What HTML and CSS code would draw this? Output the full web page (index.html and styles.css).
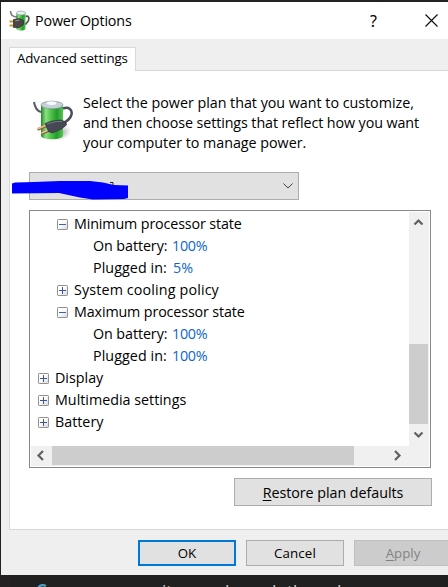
FILE: index.html
```
<!DOCTYPE html>
<html lang="en">
<head>
<meta charset="utf-8">
<title>Power Options</title>
<link rel="stylesheet" href="styles.css">
</head>
<body>
<svg width="0" height="0" class="defs" aria-hidden="true">
  <defs>
    <linearGradient id="cell" x1="0" x2="1" y1="0" y2="0">
      <stop offset="0" stop-color="#23852a"/><stop offset=".22" stop-color="#8ce084"/><stop offset=".42" stop-color="#55c84f"/><stop offset=".72" stop-color="#239b2c"/><stop offset="1" stop-color="#54c651"/>
    </linearGradient>
    <linearGradient id="box" x1="0" x2="1" y1="0" y2="1">
      <stop offset=".4" stop-color="#fff"/><stop offset="1" stop-color="#d6d6d6"/>
    </linearGradient>
    <radialGradient id="shade"><stop offset="0" stop-color="#888" stop-opacity=".7"/><stop offset="1" stop-color="#999" stop-opacity="0"/></radialGradient>
    <symbol id="battery" viewBox="0 0 40 42">
      <ellipse cx="28" cy="33" rx="11" ry="7" fill="url(#shade)" transform="rotate(-25 28 33)"/>
      <path d="M1 2C2 8 4 11 8 12" fill="none" stroke="#555967" stroke-width="2"/>
      <path d="M8 5v30.500c0 5 22 5 22 0V5z" fill="url(#cell)"/>
      <ellipse cx="19" cy="5" rx="11" ry="3.800" fill="#c6d1d8" stroke="#858d95" stroke-width=".7"/>
      <ellipse cx="18.500" cy="3.300" rx="5.500" ry="2.200" fill="#f5fafc" stroke="#b4c4d2" stroke-width=".6"/>
      <path d="M30 8.500c6-2 9.500 1 8.500 6s-5 7-9 9" fill="none" stroke="#4a4d5b" stroke-width="2.500"/>
      <path d="M4.500 29.500l10-4M9 33.500l9-4" stroke="#885f3d" stroke-width="2.600"/>
      <path d="M4 29l10-4M8.500 33l9-4" stroke="#edc18d" stroke-width="1.500"/>
      <path d="M12 23.500l7-2.500 9-1 5 2 .5 3-5 4-9 4-4-1.500z" fill="#464854" stroke="#292a34" stroke-width=".6"/>
      <path d="M14 24l9-2.500 6 0" fill="none" stroke="#82838c" stroke-width=".8"/>
    </symbol>
    <symbol id="battery-small" viewBox="0 0 20 21">
      <path d="M1 1c0 4 3 6 7 6" fill="none" stroke="#777" stroke-width="1.500"/>
      <path d="M7 3h9v16c-2 2-7 2-9 0z" fill="url(#cell)"/>
      <ellipse cx="11.500" cy="3" rx="4.500" ry="2" fill="#e5efef" stroke="#949e9e" stroke-width=".7"/>
      <path d="M16 6.500c3-1 4 1 3 4l-3 4" fill="none" stroke="#555" stroke-width="1.700"/>
      <path d="M0 11.500h6M0 15.500h6" stroke="#c99a2c" stroke-width="2"/>
      <path d="M4 9.500l6-1 4 2v4l-4 3H4z" fill="#4a4646" stroke="#302d2d" stroke-width=".7"/>
      <path d="M6 11l4-1" stroke="#999"/>
    </symbol>
    <symbol id="minus" viewBox="0 0 11 11"><rect x=".5" y=".5" width="10" height="10" rx=".7" fill="url(#box)" stroke="#919191"/><path d="M2 5.500h7" stroke="#4161a5"/></symbol>
    <symbol id="plus" viewBox="0 0 11 11"><rect x=".5" y=".5" width="10" height="10" rx=".7" fill="url(#box)" stroke="#919191"/><path d="M2 5.500h7M5.500 2v7" stroke="#38569c"/></symbol>
  </defs>
</svg>
<div class="window">
  <header class="titlebar">
    <svg class="title-icon"><use href="#battery-small"/></svg>
    <span class="title">Power Options</span>
    <span class="help">?</span>
    <svg class="close" viewBox="0 0 13 13"><path d="M.5 .5l12 12M12.500 .5l-12 12" stroke="#111" stroke-width="1.150"/></svg>
  </header>
  <div class="tabs"><div class="tab">Advanced settings</div></div>
  <main class="panel">
    <section class="intro">
      <svg class="plan-icon"><use href="#battery"/></svg>
      <p>Select the power plan that you want to customize,<br><span class="tight">and then choose settings that reflect how you want</span><br>your computer to manage power.</p>
    </section>
    <div class="select">
      <svg class="chev" viewBox="0 0 10 6"><path d="M.5 .5L5 5 9.500 .5" fill="none" stroke="#444"/></svg>
      <svg class="scribble" viewBox="0 0 116 20"><path d="M98 2.500h3v4" fill="none" stroke="#222"/><path d="M0 3.500L3 2.500 22 2 48 1 78 1 91 2.500 102 5 116 5.500V18L112 19 81 19.500 68 17.500 47 13 0 13.500z" fill="#00f"/></svg>
    </div>
    <div class="tree">
      <div class="items">
        <div class="row l2"><svg><use href="#minus"/></svg><span class="state">Minimum processor state</span></div>
        <div class="row l3"><span class="source">On battery:</span><b>100%</b></div>
        <div class="row l3"><span class="source plugged">Plugged in:</span><b class="short">5%</b></div>
        <div class="row l2"><svg><use href="#plus"/></svg><span class="policy">System cooling policy</span></div>
        <div class="row l2"><svg><use href="#minus"/></svg><span class="state">Maximum processor state</span></div>
        <div class="row l3"><span class="source">On battery:</span><b>100%</b></div>
        <div class="row l3"><span class="source plugged">Plugged in:</span><b>100%</b></div>
        <div class="row l1"><svg><use href="#plus"/></svg><span>Display</span></div>
        <div class="row l1"><svg><use href="#plus"/></svg><span>Multimedia settings</span></div>
        <div class="row l1"><svg><use href="#plus"/></svg><span>Battery</span></div>
      </div>
      <div class="vbar">
        <svg viewBox="0 0 20 20"><path d="M5.500 12.500L9.500 8.500l4 4" fill="none" stroke="#606060" stroke-width="2.200"/></svg>
        <div class="vthumb"></div>
        <svg viewBox="0 0 20 20"><path d="M5.500 8.500l4 4 4-4" fill="none" stroke="#606060" stroke-width="2.200"/></svg>
      </div>
      <div class="hbar">
        <svg viewBox="0 0 21 20"><path d="M12 5L7.500 9.500 12 14" fill="none" stroke="#606060" stroke-width="2.200"/></svg>
        <div class="hthumb"></div>
        <svg viewBox="0 0 21 20"><path d="M8 5l4.500 4.500L8 14" fill="none" stroke="#606060" stroke-width="2.200"/></svg>
      </div>
    </div>
    <div class="button restore"><span><u>R</u>estore plan defaults</span></div>
  </main>
  <footer class="actions">
    <div class="button ok">OK</div>
    <div class="button cancel">Cancel</div>
    <div class="button disabled"><span><u>A</u>pply</span></div>
  </footer>
</div>
<div class="behind"><span class="accent">C</span><span>it</span><span>d</span><span>d</span><span>th</span><span>d</span></div>
</body>
</html>
```
FILE: styles.css
```
* { box-sizing: border-box; }
body { margin: 0; width: 448px; height: 587px; overflow: hidden; background: #232122; padding: 2px 0 0 1px; font-family: "Open Sans", "Noto Sans", sans-serif; font-size: 14.3px; color: #000; }
.defs { position: absolute; }
svg { display: block; flex: none; }
span { white-space: nowrap; }
.window { height: 573px; background: #efefef; overflow: hidden; }
.titlebar { height: 37px; background: #fff; display: flex; align-items: center; padding-left: 8px; }
.title-icon { width: 21px; height: 21px; margin-right: 5px; }
.title { width: 335px; letter-spacing: -.16px; }
.help { width: 55px; font-size: 16px; font-family: "Noto Sans", sans-serif; }
.close { width: 13px; height: 13px; }
.tabs { padding: 8px 0 0 8px; height: 31px; }
.tab { width: 127px; height: 24px; border: 1px solid #d9d9d9; border-bottom: 0; background: #fff; padding-left: 7px; line-height: 21px; font-size: 13.3px; letter-spacing: -.1px; position: relative; }
.panel { margin-left: 8px; width: 460px; height: 460px; border: 1px solid #d9d9d9; background: #fff; padding: 22px 0 0 19px; }
.intro { display: flex; height: 79px; }
.plan-icon { width: 40px; height: 42px; margin: 7px 10px 0 4px; }
.intro p { margin: 0; line-height: 20px; letter-spacing: -.02px; white-space: nowrap; }
.tight { letter-spacing: -.09px; }
.select { width: 270px; height: 28px; border: 1px solid #adadad; background: #e1e1e1; display: flex; align-items: center; justify-content: flex-end; padding-right: 5px; position: relative; }
.chev { width: 10px; height: 6px; }
.scribble { position: absolute; left: -18px; top: 7px; width: 116px; height: 20px; }
.tree { margin-top: 10px; width: 402px; height: 258px; border: 1px solid #828790; padding: 1px; display: grid; grid-template-columns: 378px 20px; grid-template-rows: 234px 20px; }
.items { padding-top: 1px; overflow: hidden; }
.row { height: 22px; display: flex; align-items: center; line-height: 22px; }
.row svg { width: 11px; height: 11px; margin: 1px 6px 0 0; }
.l1 { padding-left: 7px; }
.l2 { padding-left: 26px; }
.l3 { padding-left: 62px; }
.state { letter-spacing: -.13px; }
.policy { letter-spacing: .14px; }
.source { width: 74px; letter-spacing: -.08px; }
.plugged { letter-spacing: .06px; }
.row b { font-weight: 400; color: #0b66c8; margin-left: 5px; letter-spacing: -.25px; }
.row .short { margin-left: 6px; letter-spacing: 0; }
.vbar { background: #f0f0f0; display: flex; flex-direction: column; height: 234px; }
.vbar svg, .hbar svg { width: 20px; height: 20px; }
.vthumb { margin: 112px 1px 0 0; height: 80px; background: #cdcdcd; }
.hbar { grid-column: 1 / 3; background: #f0f0f0; display: flex; }
.hbar svg { width: 21px; }
.hthumb { width: 302px; height: 19px; background: #cdcdcd; margin-right: 33px; }
.button { border: 1px solid #adadad; background: #e1e1e1; display: flex; align-items: center; justify-content: center; flex: none; width: 98px; height: 26px; font-size: 13.3px; }
u { text-decoration: underline; text-underline-offset: 2px; text-decoration-thickness: 1px; }
.restore { width: 198px; height: 28px; margin: 10px 0 0 205px; font-size: 14.3px; letter-spacing: -.04px; }
.actions { display: flex; gap: 10px; padding: 10px 0 0 137px; }
.ok { border: 2px solid #0078d7; }
.cancel { letter-spacing: .15px; }
.disabled { background: #ccc; border-color: #bfbfbf; color: #838383; }
.behind { margin-left: 10px; height: 12px; overflow: hidden; display: grid; grid-template-columns: 126px 57px 47px 21px 44px 20px; color: #d0d0d0; font-size: 17px; line-height: 23px; padding: 4px 0 0 25px; background: #202020; }
.accent { color: #4d9cc0; font-weight: 700; }
```
